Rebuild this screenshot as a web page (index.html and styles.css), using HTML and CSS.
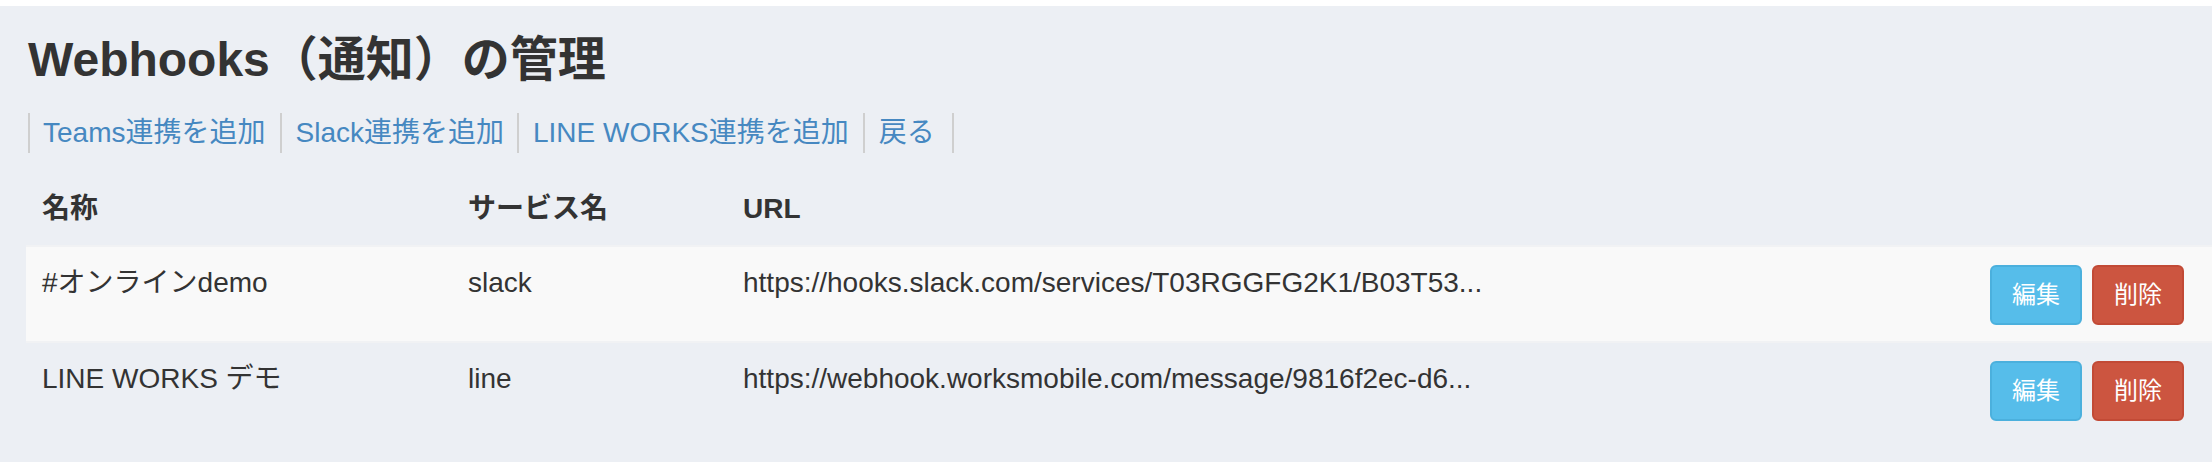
FILE: index.html
```html
<!DOCTYPE html>
<html lang="ja">
<head>
<meta charset="utf-8">
<title>Webhooks（通知）の管理</title>
<link rel="stylesheet" href="styles.css">
</head>
<body>
<div class="topbar"></div>
<main class="page">
  <h1 class="title">Webhooks（通知）の管理</h1>
  <ul class="actions-nav">
    <li><a href="#">Teams連携を追加</a></li>
    <li><a href="#">Slack連携を追加</a></li>
    <li><a href="#">LINE WORKS連携を追加</a></li>
    <li><a href="#">戻る</a></li>
  </ul>
  <table class="hooks">
    <colgroup>
      <col class="c-name">
      <col class="c-service">
      <col class="c-url">
      <col class="c-ops">
    </colgroup>
    <thead>
      <tr>
        <th>名称</th>
        <th>サービス名</th>
        <th>URL</th>
        <th></th>
      </tr>
    </thead>
    <tbody>
      <tr class="striped">
        <td>#オンラインdemo</td>
        <td>slack</td>
        <td>https://hooks.slack.com/services/T03RGGFG2K1/B03T53...</td>
        <td class="ops"><div class="btns"><a class="btn btn-edit" href="#">編集</a><a class="btn btn-del" href="#">削除</a></div></td>
      </tr>
      <tr>
        <td>LINE WORKS デモ</td>
        <td>line</td>
        <td>https://webhook.worksmobile.com/message/9816f2ec-d6...</td>
        <td class="ops"><div class="btns"><a class="btn btn-edit" href="#">編集</a><a class="btn btn-del" href="#">削除</a></div></td>
      </tr>
    </tbody>
  </table>
</main>
</body>
</html>
```
FILE: styles.css
```css
* { box-sizing: border-box; }

html, body {
  margin: 0;
  padding: 0;
}

body {
  background: #eceff4;
  color: #333333;
  font-family: "Liberation Sans", "Noto Sans CJK JP", sans-serif;
  font-size: 28px;
  line-height: 40px;
}

.topbar {
  height: 6px;
  background: #ffffff;
}

.page {
  padding: 0 0 40px 26px;
}

.title {
  margin: 28px 0 0 2px;
  font-size: 48px;
  line-height: 52px;
  font-weight: bold;
  color: #333333;
}

.actions-nav {
  list-style: none;
  display: flex;
  margin: 27px 0 0 2px;
  padding: 0;
}

.actions-nav li {
  border-left: 2px solid #cfcfcf;
  padding: 0 14px;
  line-height: 40px;
}

.actions-nav li:first-child {
  padding-left: 13px;
  padding-right: 15px;
}

.actions-nav li:nth-child(2) {
  padding-left: 13px;
  padding-right: 13px;
}

.actions-nav li:last-child {
  border-right: 2px solid #cfcfcf;
  padding-right: 17px;
}

.actions-nav a {
  color: #4688c1;
  text-decoration: none;
}

.hooks {
  margin-top: 20px;
  width: 100%;
  border-collapse: collapse;
  table-layout: fixed;
}

.c-name { width: 426px; }
.c-service { width: 275px; }
.c-ops { width: 240px; }

.hooks th {
  text-align: left;
  font-weight: bold;
  padding: 16px;
  vertical-align: bottom;
  line-height: 40px;
}

.hooks td {
  padding: 16px;
  vertical-align: top;
  border-top: 2px solid #f1f2f4;
  white-space: nowrap;
  overflow: hidden;
}

.hooks tr.striped td {
  background: #f9f9f9;
}

.hooks td.ops {
  padding-top: 18px;
  padding-right: 28px;
}

.btns {
  display: flex;
  justify-content: flex-end;
  gap: 10px;
}

.btn {
  display: block;
  padding: 10px 20px;
  font-size: 24px;
  line-height: 36px;
  border: 2px solid transparent;
  border-radius: 6px;
  color: #ffffff;
  text-decoration: none;
}

.btn-edit {
  background: #56bdea;
  border-color: #4bb0dd;
}

.btn-del {
  background: #cc5540;
  border-color: #c24a36;
}
```
